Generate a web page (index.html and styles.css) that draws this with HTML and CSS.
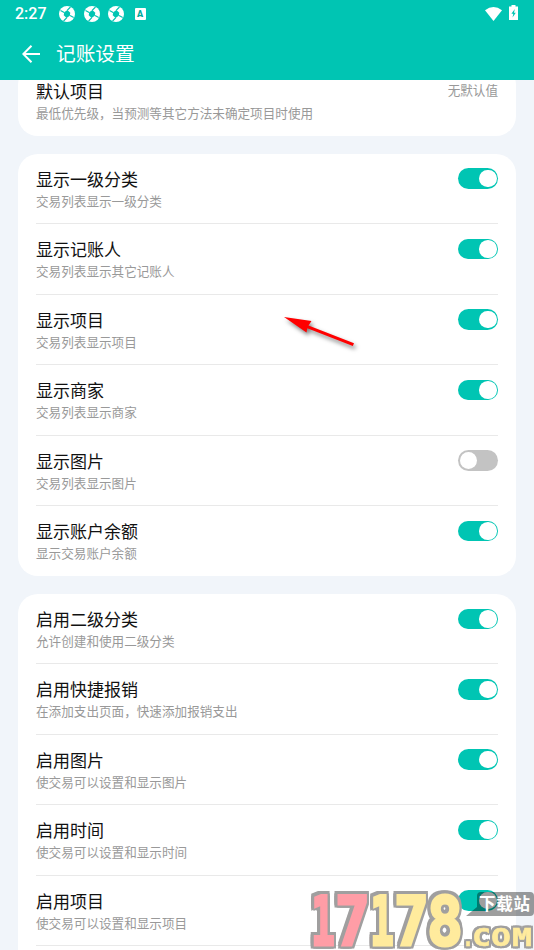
FILE: index.html
```html
<!DOCTYPE html>
<html lang="zh-CN">
<head>
<meta charset="utf-8">
<title>记账设置</title>
<link rel="stylesheet" href="styles.css">
</head>
<body>
<svg class="defs" width="0" height="0"><defs>
<symbol id="swirl" viewBox="0 0 16 16"><circle cx="8" cy="8" r="8" fill="#fff"/><path d="M5.200 6.200 8.400 4 11.300 6.800 10.800 9.700 7.600 12 4.700 9.200Z" fill="#00c5b3"/><path d="M5.200 6.500 1.500 4.500M8.200 4.300 11.500 1M11 9.500l3.700 2M7.800 11.700 4.600 15" stroke="#00c5b3" stroke-width="1.200"/></symbol>
</defs></svg>
<header class="top">
  <div class="status">
    <span class="clock">2:27</span>
    <svg class="swirl"><use href="#swirl"/></svg>
    <svg class="swirl"><use href="#swirl"/></svg>
    <svg class="swirl"><use href="#swirl"/></svg>
    <span class="badge">A</span>
    <svg class="wifi" viewBox="0 0 17 14"><path d="M0 3.2Q8.500-3 17 3.200L8.500 14Z" fill="#fff"/></svg>
    <svg class="battery" viewBox="0 0 9 15"><path d="M2.500 0h4v1.500H9V15H0V1.500h2.500Z" fill="#fff"/><path d="M5.800 4 2.400 8.700h1.900L3.500 12.500l3.300-4.800H5z" fill="#00c5b3"/></svg>
  </div>
  <div class="bar">
    <svg class="back" viewBox="0 0 18 18"><path d="M18 9H1.500M9.500 .7 1.300 9l8.200 8.300" fill="none" stroke="#fff" stroke-width="2"/></svg>
    <h1>记账设置</h1>
  </div>
</header>
<main>
  <section class="card first">
    <div class="row"><div><h2>默认项目</h2><p>最低优先级，当预测等其它方法未确定项目时使用</p></div><span class="value">无默认值</span></div>
  </section>
  <section class="card">
    <div class="row"><div><h2>显示一级分类</h2><p>交易列表显示一级分类</p></div><i class="switch on"></i></div>
    <div class="row"><div><h2>显示记账人</h2><p>交易列表显示其它记账人</p></div><i class="switch on"></i></div>
    <div class="row"><div><h2>显示项目</h2><p>交易列表显示项目</p></div><i class="switch on"></i></div>
    <div class="row"><div><h2>显示商家</h2><p>交易列表显示商家</p></div><i class="switch on"></i></div>
    <div class="row"><div><h2>显示图片</h2><p>交易列表显示图片</p></div><i class="switch"></i></div>
    <div class="row"><div><h2>显示账户余额</h2><p>显示交易账户余额</p></div><i class="switch on"></i></div>
  </section>
  <section class="card last">
    <div class="row"><div><h2>启用二级分类</h2><p>允许创建和使用二级分类</p></div><i class="switch on"></i></div>
    <div class="row"><div><h2>启用快捷报销</h2><p>在添加支出页面，快速添加报销支出</p></div><i class="switch on"></i></div>
    <div class="row"><div><h2>启用图片</h2><p>使交易可以设置和显示图片</p></div><i class="switch on"></i></div>
    <div class="row"><div><h2>启用时间</h2><p>使交易可以设置和显示时间</p></div><i class="switch on"></i></div>
    <div class="row"><div><h2>启用项目</h2><p>使交易可以设置和显示项目</p></div><i class="switch on"></i></div>
    <div class="row"></div>
  </section>
</main>
<svg class="arrow" viewBox="0 0 100 60"><path d="M14 17 41.500 21 38.500 25.500 84 43.200 82.800 46 37.300 28.300 36.500 32.500Z" fill="#f00"/></svg>
<svg class="mark" viewBox="0 0 230 70">
  <path class="bubble" d="M177 12h49q4 0 4 4v16q0 4-4 4h-64l11-9V16q0-4 4-4z"/>
  <g class="digits">
    <text class="pink" x="7" y="65" textLength="24" lengthAdjust="spacingAndGlyphs">1</text>
    <text class="pink" x="31" y="65" textLength="35" lengthAdjust="spacingAndGlyphs">7</text>
    <text x="66" y="65" textLength="24" lengthAdjust="spacingAndGlyphs">1</text>
    <text x="90" y="65" textLength="35" lengthAdjust="spacingAndGlyphs">7</text>
    <text x="123" y="65" textLength="36" lengthAdjust="spacingAndGlyphs">8</text>
  </g>
  <text class="site" x="175" y="30" textLength="51">下载站</text>
  <g class="com">
    <text x="158" y="65.500" textLength="12" lengthAdjust="spacingAndGlyphs">.</text>
    <text x="168" y="65.500" textLength="19" lengthAdjust="spacingAndGlyphs">C</text>
    <text x="187" y="65.500" textLength="20" lengthAdjust="spacingAndGlyphs">O</text>
    <text x="208" y="65.500" textLength="20" lengthAdjust="spacingAndGlyphs">M</text>
  </g>
</svg>
</body>
</html>
```
FILE: styles.css
```css
* { box-sizing: border-box; margin: 0; padding: 0; }
body { position: relative; width: 534px; height: 950px; overflow: hidden; background: #f1f5fa; font-family: Roboto, "Noto Sans CJK SC", sans-serif; }
.defs { position: absolute; }
.top { height: 80px; background: #00c5b3; color: #fff; }
.status { display: flex; align-items: center; height: 27px; padding: 0 15px; }
.clock { width: 44px; font-size: 16px; font-weight: 500; line-height: 27px; }
.swirl { width: 16px; height: 16px; margin-right: 8.500px; }
.badge { width: 11px; height: 12px; margin-left: 2px; border-radius: 1px; background: #fff; color: #00a99b; font-size: 9px; font-weight: 900; line-height: 12px; text-align: center; }
.wifi { width: 17px; height: 14px; margin-left: auto; margin-right: 7px; }
.battery { width: 9px; height: 15px; margin-right: 1px; margin-top: -2px; }
.bar { display: flex; align-items: center; height: 53px; padding-left: 22px; }
.back { width: 18px; height: 18px; margin-right: 16px; }
h1 { padding-top: 2px; font-size: 19.700px; font-weight: 400; line-height: 30px; }
main { display: flex; flex-direction: column; gap: 18px; height: 870px; padding: 0 18px; overflow: hidden; }
.card { flex: none; padding: 0 18px; border-radius: 20px; background: #fff; }
.first { height: 70.500px; margin-top: -14.700px; }
.row { display: flex; justify-content: space-between; height: 70.500px; padding-top: 14px; border-bottom: 1px solid #e9e9e9; }
.row:last-child { border-bottom: 0; }
.card:not(.first) .row:last-child { height: 70px; }
.last { margin-top: -.3px; }
.last .row { height: 70.450px; }
h2 { height: 24px; color: #111; font-size: 17px; font-weight: 400; line-height: 24px; }
p { color: #999; font-size: 12.600px; line-height: 20px; }
.first h2 { padding-top: 1px; }
.first p { padding-top: .5px; }
.value { color: #999; font-size: 12.600px; line-height: 24px; }
.switch { width: 40.500px; height: 20.500px; margin-top: .6px; padding: 1.500px 2px; border-radius: 11px; background: #c3c3c3; }
.switch::before { content: ""; display: block; width: 17.500px; height: 17.500px; border-radius: 50%; background: #fff; }
.on { background: #00c5b3; }
.on::before { margin-left: auto; margin-right: -.5px; }
.arrow { position: absolute; left: 270px; top: 300px; width: 100px; height: 60px; filter: drop-shadow(2px 3px 2px rgba(0,0,0,.5)); }
.mark { position: absolute; left: 304px; top: 880px; width: 230px; height: 70px; }
.mark text { fill: #ffeb9d; stroke: #ffeb9d; stroke-width: 3px; font-family: "DejaVu Sans Mono", monospace; font-weight: 700; }
.digits, .com { filter: drop-shadow(2.500px 0 0 #a09f9f) drop-shadow(-2.500px 0 0 #a09f9f) drop-shadow(0 2.500px 0 #a09f9f) drop-shadow(0 -2.500px 0 #a09f9f); }
.digits { font-size: 68px; }
.mark .pink { fill: #ff9da6; stroke: #ff9da6; }
.com { font-size: 24px; }
.mark .com text { stroke-width: .5px; }
.mark .com { filter: drop-shadow(2px 0 0 #a09f9f) drop-shadow(-2px 0 0 #a09f9f) drop-shadow(0 2px 0 #a09f9f) drop-shadow(0 -2px 0 #a09f9f); }
.mark .site { font-family: "Noto Sans CJK SC", sans-serif; font-size: 16.500px; fill: #fff; stroke: none; }
.bubble { fill: #000; fill-opacity: .38; }
```
